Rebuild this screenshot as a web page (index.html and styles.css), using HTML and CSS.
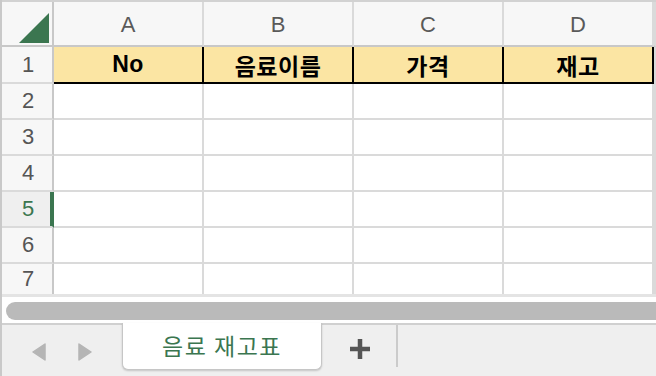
FILE: index.html
```html
<!doctype html>
<html>
  <head>
    <title>음료 재고표</title>
    <link rel="stylesheet" href="styles.css">
  </head>
  <body>
    <div class="sheet">
      <div class="row head">
        <div class="rh corner">
          <svg width="30" height="30" viewBox="0 0 30 30"><polygon points="0,30 30,0 30,30" fill="#3b7650"/></svg>
        </div>
        <div class="ch">A</div>
        <div class="ch">B</div>
        <div class="ch">C</div>
        <div class="ch">D</div>
        <div class="ch"></div>
      </div>
      <div class="row title">
        <div class="rh">1</div>
        <div class="cell">No</div>
        <div class="cell">음료이름</div>
        <div class="cell">가격</div>
        <div class="cell">재고</div>
        <div class="cell blank"></div>
      </div>
      <div class="row">
        <div class="rh">2</div>
        <div class="cell"></div><div class="cell"></div><div class="cell"></div><div class="cell"></div><div class="cell"></div>
      </div>
      <div class="row">
        <div class="rh">3</div>
        <div class="cell"></div><div class="cell"></div><div class="cell"></div><div class="cell"></div><div class="cell"></div>
      </div>
      <div class="row">
        <div class="rh">4</div>
        <div class="cell"></div><div class="cell"></div><div class="cell"></div><div class="cell"></div><div class="cell"></div>
      </div>
      <div class="row">
        <div class="rh selected">5</div>
        <div class="cell"></div><div class="cell"></div><div class="cell"></div><div class="cell"></div><div class="cell"></div>
      </div>
      <div class="row">
        <div class="rh">6</div>
        <div class="cell"></div><div class="cell"></div><div class="cell"></div><div class="cell"></div><div class="cell"></div>
      </div>
      <div class="row last">
        <div class="rh">7</div>
        <div class="cell"></div><div class="cell"></div><div class="cell"></div><div class="cell"></div><div class="cell"></div>
      </div>
    </div>

    <div class="hscroll">
      <div class="thumb"></div>
    </div>

    <div class="tabs">
      <div class="nav">
        <svg width="14" height="18" viewBox="0 0 14 18"><polygon points="13,1 13,17 1,9" fill="#b5b5b5" stroke="#b5b5b5" stroke-width="1.5" stroke-linejoin="round"/></svg>
        <svg width="14" height="18" viewBox="0 0 14 18"><polygon points="1,1 1,17 13,9" fill="#b5b5b5" stroke="#b5b5b5" stroke-width="1.5" stroke-linejoin="round"/></svg>
      </div>
      <div class="tab">음료 재고표</div>
      <div class="add">
        <svg width="20" height="20" viewBox="0 0 20 20"><path d="M10 0V20M0 10H20" stroke="#555" stroke-width="4.5"/></svg>
      </div>
      <div class="sep"></div>
    </div>
  </body>
</html>
```

FILE: styles.css
```css
* {
  box-sizing: border-box;
}
body {
  margin: 0;
  width: 656px;
  height: 376px;
  overflow: hidden;
  background: #fff;
  border-left: 2px solid #c9c9c9;
  font-family: "Liberation Sans", "Noto Sans CJK KR", sans-serif;
}
.sheet {
  height: 294px;
  overflow: hidden;
  border-top: 2px solid #d2d2d2;
}
.row {
  display: grid;
  grid-template-columns: 52px 150px 150px 150px 150px 1fr;
  height: 36px;
}
.row > div {
  border-right: 2px solid #dadada;
  border-bottom: 2px solid #dadada;
}
.rh {
  display: flex;
  align-items: center;
  justify-content: center;
  background: #f7f7f7;
  color: #555;
  font-size: 22px;
  padding-left: 2px;
}
.row > .rh {
  border-right-color: #c8c8c8;
}
.row > .rh.selected {
  background: #efefef;
  color: #3b7650;
  border-right-color: #3b7650;
  box-shadow: inset -2px 0 0 #3b7650;
}
.head {
  height: 45px;
}
.head > div {
  border-bottom-color: #c8c8c8;
}
.corner {
  align-items: flex-end;
  justify-content: flex-end;
  padding: 0 3px 2px 0;
}
.ch {
  display: flex;
  align-items: center;
  justify-content: center;
  background: #f7f7f7;
  color: #5a5a5a;
  font-size: 22px;
  padding-top: 2px;
}
.title {
  height: 37px;
}
.title > .cell {
  display: flex;
  align-items: center;
  justify-content: center;
  background: #fbe5a3;
  border-right-color: #000;
  border-bottom-color: #000;
  font-size: 23px;
  font-weight: bold;
  color: #000;
  letter-spacing: 0.5px;
}
.title > .cell.blank {
  background: #fff;
  border-bottom-color: #dadada;
  border-right-color: #dadada;
}
.title > .rh {
  border-bottom-color: #dadada;
}
.last {
  height: 30px;
}
.last > div {
  border-bottom: none;
}
.hscroll {
  height: 29px;
  border-top: 3px solid #e4e4e4;
  padding: 5px 0 0 4px;
}
.thumb {
  height: 18px;
  border-radius: 9px;
  background: #bababa;
  margin-right: -20px;
}
.tabs {
  display: flex;
  height: 53px;
  background: #efefef;
  border-top: 2px solid #d0d0d0;
  margin-left: -2px;
}
.nav {
  width: 122px;
  display: flex;
  align-items: center;
  gap: 32px;
  padding: 2px 0 0 32px;
}
.tab {
  width: 200px;
  height: 47px;
  margin-top: -2px;
  background: #fff;
  border: 1px solid #c6c6c6;
  border-top: none;
  border-radius: 0 0 6px 6px;
  box-shadow: 0 1px 2px rgba(0, 0, 0, 0.18);
  display: flex;
  align-items: center;
  justify-content: center;
  color: #3b7650;
  font-family: "Noto Sans CJK KR", sans-serif;
  font-size: 23px;
  letter-spacing: 1.5px;
  padding-bottom: 2px;
}
.add {
  margin-left: 28px;
  padding-top: 14px;
}
.sep {
  width: 2px;
  height: 42px;
  background: #cbcbcb;
  margin-left: 26px;
}
```
